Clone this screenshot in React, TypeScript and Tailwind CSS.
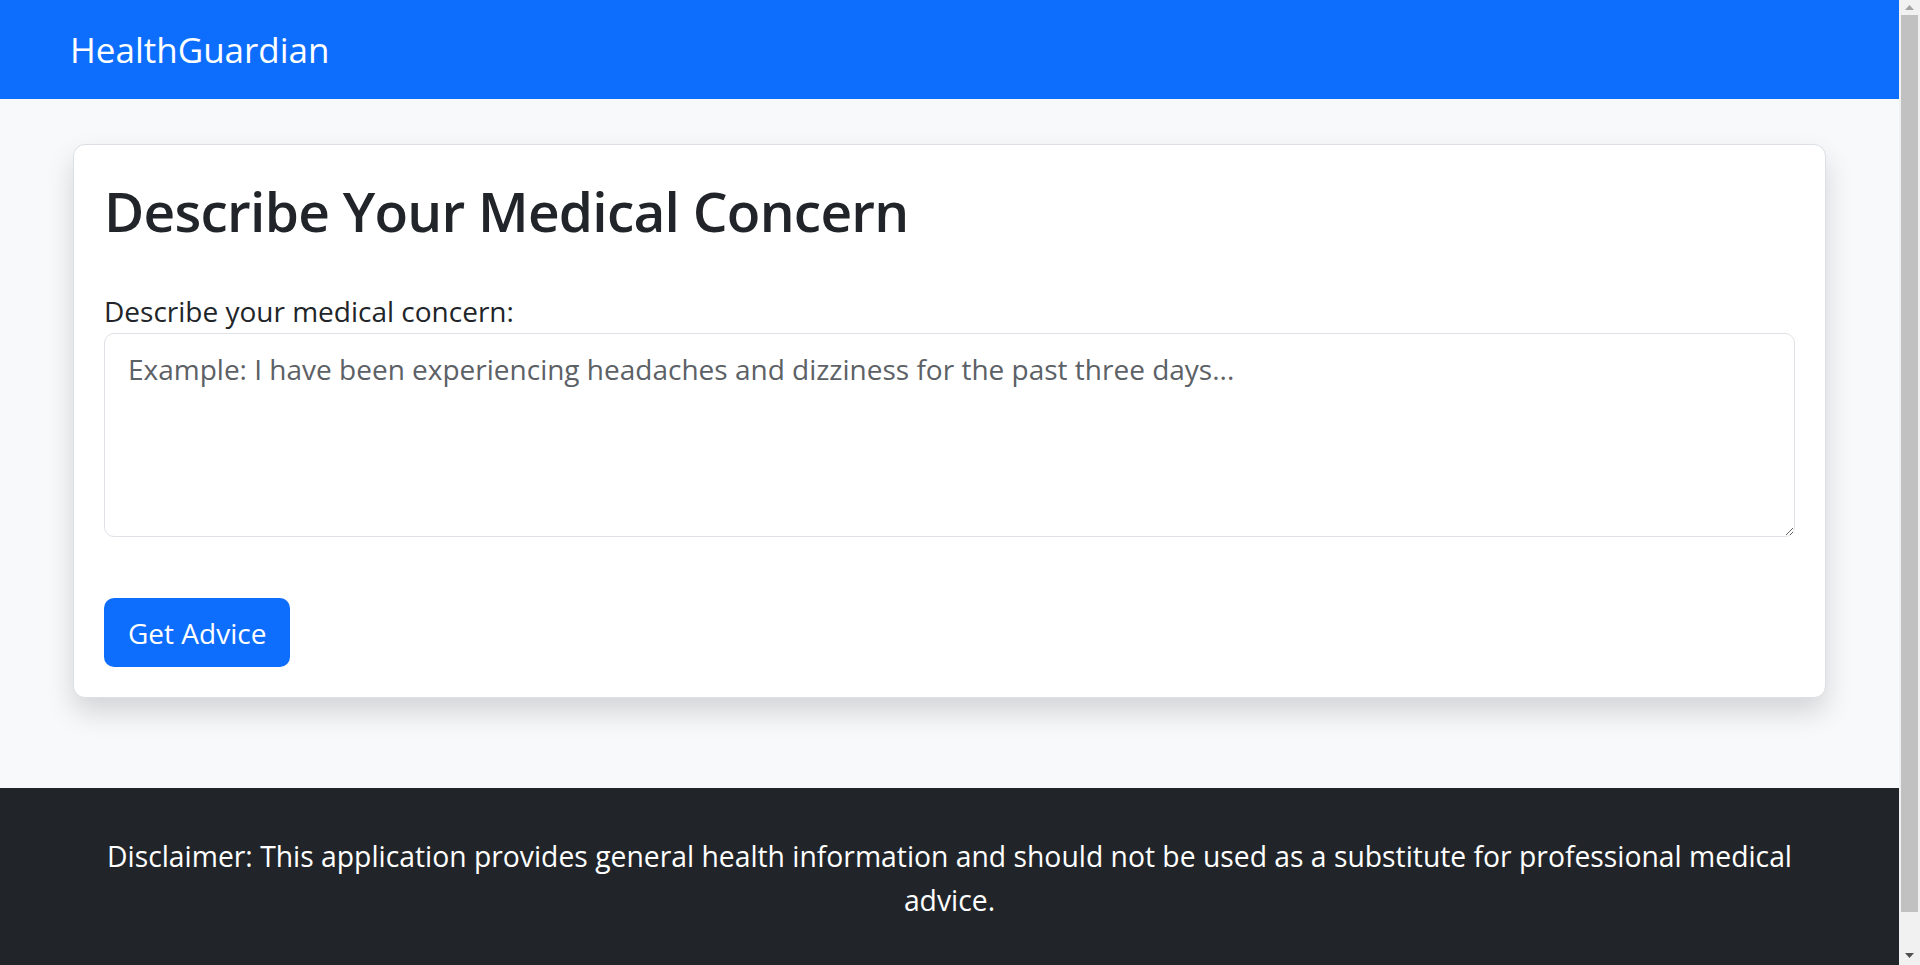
function FakeScrollbar() {
  return (
    <div className="flex h-full w-[21px] shrink-0 flex-col bg-[#f1f1f1]">
      <div className="flex h-[15px] items-center justify-center">
        <svg width="9" height="5" viewBox="0 0 9 5">
          <path d="M4.5 0 L9 5 L0 5 Z" fill="#a3a3a3" />
        </svg>
      </div>
      <div className="mx-[2px] h-[897px] bg-[#c1c1c1]" />
      <div className="flex-1" />
      <div className="flex h-[20px] items-center justify-center">
        <svg width="9" height="5" viewBox="0 0 9 5">
          <path d="M0 0 L9 0 L4.5 5 Z" fill="#505050" />
        </svg>
      </div>
    </div>
  );
}

export default function App() {
  return (
    <div className="flex h-screen overflow-hidden bg-[#f8f9fa] font-['Open_Sans',sans-serif] text-[#212529]">
      <div className="h-full flex-1 overflow-hidden">
        {/* navbar */}
        <nav className="flex h-[99px] items-center bg-[#0d6efd] px-[70px]">
          <span className="text-[35px] leading-[52px] text-white">HealthGuardian</span>
        </nav>

        <main className="px-[73px] pb-[90px] pt-[45px]">
          <div className="rounded-[12px] border border-[#dcdfe3] bg-white p-[30px] shadow-[0_14px_28px_rgba(0,0,0,0.15)]">
            <h1 className="mt-[3px] text-[55px] font-semibold leading-[66px] tracking-[-0.75px]">
              Describe Your Medical Concern
            </h1>

            <form className="mt-[46px]" onSubmit={(e) => e.preventDefault()}>
              <label htmlFor="concern" className="mb-px block text-[28px] leading-[42px]">
                Describe your medical concern:
              </label>
              <textarea
                id="concern"
                className="block h-[204px] w-full rounded-[10px] border border-[#dee2e6] bg-white px-[23px] pt-[14px] text-[28px] leading-[42px] text-[#212529] outline-none placeholder:text-[#5c6166]"
                placeholder="Example: I have been experiencing headaches and dizziness for the past three days..."
              />
              <button
                type="submit"
                className="mt-[61px] h-[69px] rounded-[10px] bg-[#0d6efd] px-6 text-[28px] leading-[42px] text-white"
              >
                Get Advice
              </button>
            </form>
          </div>
        </main>

        {/* footer */}
        <footer className="bg-[#212529] pb-[46px] pt-[46px] text-white">
          <p className="mx-auto mb-[28px] max-w-[1760px] text-center text-[28.3px] leading-[44px]">
            Disclaimer: This application provides general health information and should not be used as a
            substitute for professional medical advice.
          </p>
        </footer>
      </div>
      <FakeScrollbar />
    </div>
  );
}
